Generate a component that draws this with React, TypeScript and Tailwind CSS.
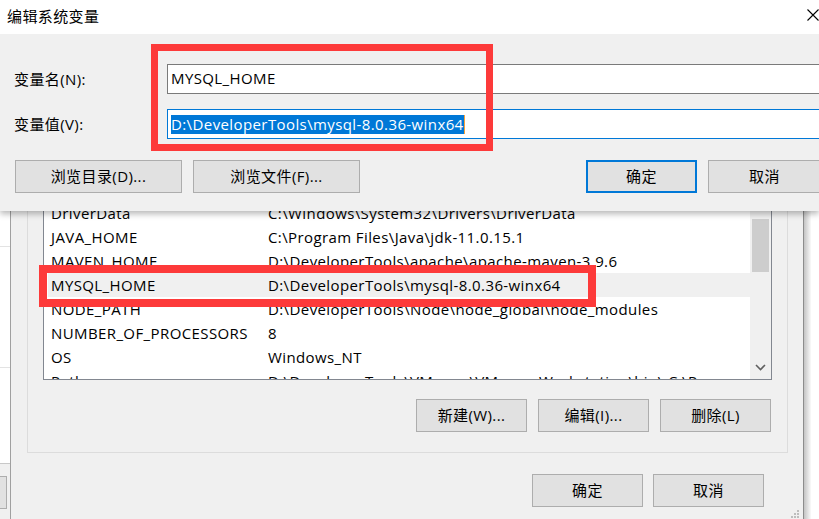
import React from "react";

const rows: [string, string][] = [
  ["DriverData", "C:\\Windows\\System32\\Drivers\\DriverData"],
  ["JAVA_HOME", "C:\\Program Files\\Java\\jdk-11.0.15.1"],
  ["MAVEN_HOME", "D:\\DeveloperTools\\apache\\apache-maven-3.9.6"],
  ["MYSQL_HOME", "D:\\DeveloperTools\\mysql-8.0.36-winx64"],
  ["NODE_PATH", "D:\\DeveloperTools\\Node\\node_global\\node_modules"],
  ["NUMBER_OF_PROCESSORS", "8"],
  ["OS", "Windows_NT"],
  ["Path", "D:\\DeveloperTools\\VMware\\VMware Workstation\\bin\\;C:\\P..."],
];

function Btn({ label, w, primary }: { label: string; w: string; primary?: boolean }) {
  return (
    <div
      className={
        "h-[33px] shrink-0 flex items-center justify-center bg-[#e1e1e1] text-black " +
        w +
        (primary ? " border-2 border-[#0078d7]" : " border border-[#adadad]")
      }
    >
      {label}
    </div>
  );
}

export default function App() {
  return (
    <div className="relative w-[819px] h-[519px] overflow-hidden bg-white text-[15px] text-black font-['Open_Sans','Noto_Sans_CJK_SC',sans-serif] tracking-[0.4px]">
      {/* background window */}
      <div className="flex h-full">
        {/* far-left strip of another window */}
        <div className="w-[10px] shrink-0 flex flex-col bg-white">
          <div className="h-[247px] border-b border-[#e3e3e3]" />
          <div className="h-[121px] border-b border-[#e3e3e3]" />
          <div className="h-[96px] border-b border-[#c8c8c8]" />
          <div className="flex-1 bg-[#f0f0f0] pt-[12px]">
            <div className="h-[33px] w-[7px] bg-[#e1e1e1] border border-l-0 border-[#adadad]" />
          </div>
        </div>
        <div className="w-px shrink-0 bg-[#a0a0a0]" />
        {/* main dialog body */}
        <div className="w-[792px] shrink-0 bg-[#f0f0f0] pt-[140px] flex flex-col">
          <div className="ml-[16px] mr-[15px] border border-[#dcdcdc] pt-[35px] pl-[15px] pr-[15px] pb-[20px] flex flex-col">
            <div className="h-[204px] border border-[#828790] bg-white flex overflow-hidden">
              <div className="flex-1 flex flex-col pt-[24px]">
                {rows.map(([k, v]) => (
                  <div
                    key={k}
                    className={
                      "h-[24px] shrink-0 ml-[4px] flex items-center pl-[3px] whitespace-nowrap " +
                      (k === "MYSQL_HOME" ? "bg-[#f0f0f0]" : "")
                    }
                  >
                    <span className="w-[217px] shrink-0">{k}</span>
                    <span>{v}</span>
                  </div>
                ))}
              </div>
              <div className="w-[21px] shrink-0 bg-[#f0f0f0] flex flex-col items-center pt-[42px]">
                <div className="w-[17px] h-[53px] bg-[#cdcdcd]" />
                <div className="flex-1" />
                <svg width="11" height="7" viewBox="0 0 11 7" className="mb-[8px]">
                  <path d="M1 1 L5.5 5.5 L10 1" fill="none" stroke="#606060" strokeWidth="1.6" />
                </svg>
              </div>
            </div>
            <div className="mt-[19px] flex justify-end gap-[11px] pr-px">
              <Btn label="新建(W)..." w="w-[111px]" />
              <Btn label="编辑(I)..." w="w-[111px]" />
              <Btn label="删除(L)" w="w-[111px]" />
            </div>
          </div>
          <div className="mt-[21px] pr-[39px] flex justify-end gap-[10px]">
            <Btn label="确定" w="w-[111px]" />
            <Btn label="取消" w="w-[111px]" />
          </div>
          <div className="flex-1 flex justify-end items-end pr-[4px] pb-[1px]">
            <svg width="8" height="8" viewBox="0 0 8 8">
              <rect x="6" y="0" width="2" height="2" fill="#bdbdbd" />
              <rect x="3" y="3" width="2" height="2" fill="#bdbdbd" />
              <rect x="6" y="3" width="2" height="2" fill="#bdbdbd" />
              <rect x="0" y="6" width="2" height="2" fill="#bdbdbd" />
              <rect x="3" y="6" width="2" height="2" fill="#bdbdbd" />
              <rect x="6" y="6" width="2" height="2" fill="#bdbdbd" />
            </svg>
          </div>
        </div>
        <div className="w-px shrink-0 bg-[#8c8c8c]" />
        <div className="w-[7px] shrink-0 bg-gradient-to-r from-[#c4c4c4] to-[#fafafa]" />
        <div className="flex-1 bg-white" />
      </div>

      {/* red annotation on list row */}
      <div className="absolute left-[39px] top-[265px] w-[557px] h-[42px] border-[8px] border-[#fd3a3a]" />

      {/* top dialog */}
      <div className="absolute left-0 top-0 w-[819px] h-[211px] flex flex-col shadow-[0_3px_6px_rgba(0,0,0,0.28)]">
        <div className="h-[34px] bg-white flex items-center pl-[7px] pb-[2px] relative">
          <span>编辑系统变量</span>
          <svg width="12" height="12" viewBox="0 0 12 12" className="absolute left-[807px] top-[9px]">
            <path d="M0.5 0.5 L11.5 11.5 M11.5 0.5 L0.5 11.5" stroke="#000" strokeWidth="1.1" />
          </svg>
        </div>
        <div className="flex-1 bg-[#f0f0f0] pt-[30px] flex flex-col">
          <div className="flex items-center h-[30px]">
            <span className="w-[167px] pl-[14px] shrink-0">变量名(N):</span>
            <div className="w-[700px] h-[30px] shrink-0 border border-[#7a7a7a] bg-white flex items-center pl-[3px] pb-[2px]">
              MYSQL_HOME
            </div>
          </div>
          <div className="flex items-center h-[30px] mt-[15px]">
            <span className="w-[167px] pl-[14px] shrink-0">变量值(V):</span>
            <div className="w-[700px] h-[30px] shrink-0 border border-[#0078d7] bg-white flex items-center pl-[3px]">
              <span className="bg-[#0078d7] text-white leading-[19px]">D:\DeveloperTools\mysql-8.0.36-winx64</span>
              <span className="w-px h-[19px] bg-[#f7a23a]" />
            </div>
          </div>
          <div className="flex mt-[21px] pl-[15px]">
            <div className="flex gap-[11px]">
              <Btn label="浏览目录(D)..." w="w-[167px]" />
              <Btn label="浏览文件(F)..." w="w-[167px]" />
            </div>
            <div className="flex gap-[11px] ml-[226px]">
              <Btn label="确定" w="w-[111px]" primary />
              <Btn label="取消" w="w-[113px]" />
            </div>
          </div>
        </div>
      </div>

      {/* red annotation on top dialog */}
      <div className="absolute left-[151px] top-[44px] w-[342px] h-[107px] border-[7px] border-[#fd3a3a]" />
    </div>
  );
}
